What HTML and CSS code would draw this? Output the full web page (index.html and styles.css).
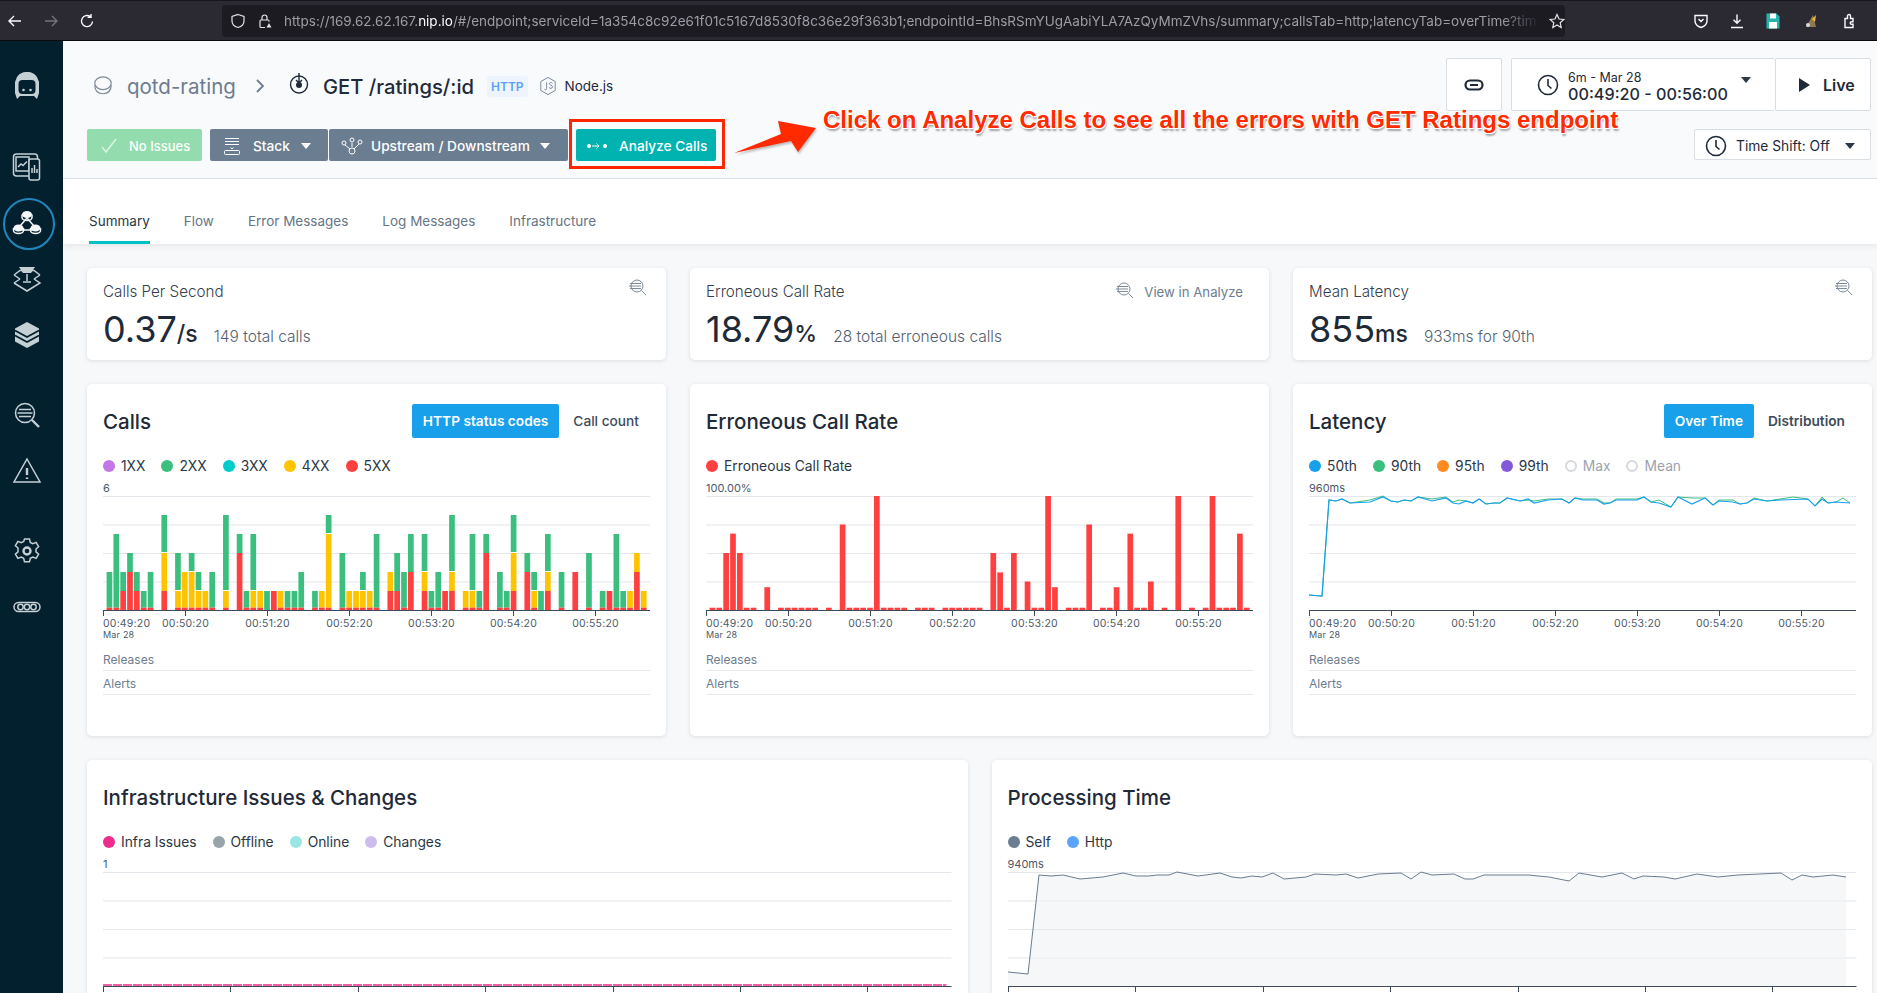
FILE: index.html
```html
<!DOCTYPE html>
<html lang="en">
<head>
  <meta charset="UTF-8">
  <meta name="viewport" content="width=device-width, initial-scale=1.0">
  <title>GET /ratings/:id</title>
  <link rel="stylesheet" href="styles.css">
</head>
<body>
  <div class="browser-bar">
    <svg class="nav-icon" viewBox="0 0 16 16"><path d="M14 8H2M7 3 2 8l5 5"/></svg>
    <svg class="nav-icon nav-icon-dim" viewBox="0 0 16 16"><path d="M2 8h12M9 3l5 5-5 5"/></svg>
    <svg class="nav-icon" viewBox="0 0 16 16"><path d="M13.5 8.500A5.500 5.500 0 1 1 11.500 3.800M12 1v3.400H8.600"/></svg>
    <div class="url-bar">
      <svg class="url-icon" viewBox="0 0 16 16"><path d="M8 1.500 14 3.500V8c0 3.500-2.500 5.500-6 6.500C4.500 13.500 2 11.500 2 8V3.500z"/></svg>
      <svg class="url-icon" viewBox="0 0 16 16"><rect x="3" y="7" width="9" height="7.500" rx="1"/><path d="M5 7V4.500a2.500 2.500 0 0 1 5 0V7"/><path class="url-warn" d="M12 9l3.500 6h-7z"/></svg>
      <div class="url-text">https://169.62.62.167.<b>nip.io</b>/#/endpoint;serviceId=1a354c8c92e61f01c5167d8530f8c36e29f363b1;endpointId=BhsRSmYUgAabiYLA7AzQyMmZVhs/summary;callsTab=http;latencyTab=overTime?tim</div>
      <svg class="url-icon url-star" viewBox="0 0 16 16"><path d="M8 1.500 10 6l4.800.5-3.600 3.200 1 4.800L8 12l-4.200 2.500 1-4.800L1.200 6.500 6 6z"/></svg>
    </div>
    <div class="browser-tools">
      <svg class="nav-icon" viewBox="0 0 16 16"><path d="M2 2.500h12V8c0 3.500-3 5.500-6 6.500C5 13.500 2 11.500 2 8zM5.500 6 8 8.500 10.500 6"/></svg>
      <svg class="nav-icon" viewBox="0 0 16 16"><path d="M8 1.500V10M4.500 6.800 8 10.300l3.500-3.500M2 14.500h12"/></svg>
      <svg class="tool-save" viewBox="0 0 16 16"><path d="M1.500 0.500h10l3 3v12h-13z" fill="#27b3ad"/><rect x="5" y="0.500" width="6" height="5" fill="#fff"/><rect x="4" y="9" width="8" height="6.500" fill="#fff"/></svg>
      <svg class="tool-save" viewBox="0 0 16 16"><path d="M3 14 10 2l3 12z" fill="#8d7a4f"/><path d="M9 6l4-4-1 7z" fill="#f2b632"/><circle cx="5" cy="12" r="2" fill="#d9d9d9"/></svg>
      <svg class="nav-icon" viewBox="0 0 16 16"><path d="M4 5.500h2.500V3a1.500 1.500 0 0 1 3 0v2.500H12v3.200h-1.500a1.300 1.300 0 0 0 0 2.600H12v3.200H4z"/></svg>
    </div>
  </div>

  <div class="app">
    <nav class="sidebar">
      <a class="side-item" href="#">
        <svg class="side-icon" viewBox="0 0 30 30"><path class="fill" d="M15 1c5 0 8 2 10 5l2 5v11l-2 6-3-3H8l-3 3-2-6V11l2-5c2-3 5-5 10-5z"/><rect class="hole" x="6.500" y="9" width="17" height="14" rx="4"/><circle class="fill" cx="11.500" cy="19" r="1.300"/><circle class="fill" cx="18.500" cy="19" r="1.300"/></svg>
      </a>
      <div class="side-group">
        <a class="side-item" href="#">
          <svg class="side-icon" viewBox="0 0 30 30"><rect x="1.500" y="2" width="24" height="22" rx="3"/><rect x="4" y="5" width="13" height="14"/><path d="m6 15 3-3 2 1.500 4-4"/><rect class="hole-line" x="17" y="7" width="10.500" height="21" rx="2"/><path d="M20 21v-5M22.500 21v-8M25 21v-4"/></svg>
        </a>
        <a class="side-item side-item-active" href="#">
          <svg class="side-icon side-icon-bright" viewBox="0 0 30 30"><path d="M15 10 8 18M15 10l7 8M9 22h12"/><ellipse class="fill" cx="15" cy="6.500" rx="5" ry="3.500"/><path d="M10 6.500v3c0 1.500 2 3 5 3s5-1.500 5-3v-3"/><ellipse class="fill" cx="6.500" cy="20" rx="5" ry="3.500"/><path d="M1.500 20v2.500c0 1.500 2 3 5 3s5-1.500 5-3V20"/><ellipse class="fill" cx="23.500" cy="20" rx="5" ry="3.500"/><path d="M18.500 20v2.500c0 1.500 2 3 5 3s5-1.500 5-3V20"/></svg>
        </a>
        <a class="side-item" href="#">
          <svg class="side-icon" viewBox="0 0 30 30"><path d="M2 11 8 6.500h3M28 11l-6-4.500h-3M2 11l6 4M28 11l-6 4M2 19l13 8 13-8-6-4M2 19l6-4"/><path class="fill" d="M7 3h16l-4 6h-8z"/><path d="M15 10v7M11 18h8"/></svg>
        </a>
        <a class="side-item" href="#">
          <svg class="side-icon" viewBox="0 0 30 30"><path class="fill" d="M15 2 27 8.500v13L15 28 3 21.500v-13z"/><path class="cut" d="M3 10.500 15 17l12-6.500M3 15.500 15 22l12-6.500"/></svg>
        </a>
      </div>
      <div class="side-group">
        <a class="side-item" href="#">
          <svg class="side-icon" viewBox="0 0 30 30"><circle cx="13" cy="13" r="9.500"/><path class="thick" d="m20 20 7 7"/><path d="M7 9.500h12M5.500 13h15M7 16.500h12"/></svg>
        </a>
        <a class="side-item" href="#">
          <svg class="side-icon" viewBox="0 0 30 30"><path d="M15 3 28 26H2zM2 26h26"/><path class="thick" d="M15 12v7M15 21.500v1.500"/></svg>
        </a>
      </div>
      <div class="side-group">
        <a class="side-item" href="#">
          <svg class="side-icon" viewBox="0 0 30 30"><path d="M12.500 3h5l.8 3.500 2.500 1.200 3.300-1.300 2.500 4.300-2.600 2.300v2.800l2.600 2.300-2.500 4.300-3.300-1.300-2.500 1.200-.8 3.500h-5l-.8-3.500-2.500-1.200-3.300 1.300-2.500-4.300 2.600-2.300V12l-2.600-2.300 2.500-4.300 3.300 1.300 2.500-1.200z"/><circle class="thick" cx="15" cy="15" r="3.500"/></svg>
        </a>
        <a class="side-item" href="#">
          <svg class="side-icon" viewBox="0 0 30 30"><rect x="2" y="10.500" width="26" height="9" rx="4.500"/><circle cx="8.500" cy="15" r="2.700"/><circle cx="15" cy="15" r="2.700"/><circle cx="21.500" cy="15" r="2.700"/></svg>
        </a>
      </div>
    </nav>

    <main class="main">
      <header class="head">
        <div class="head-left">
          <div class="crumbs">
            <svg class="crumb-service" viewBox="0 0 22 22"><ellipse cx="11" cy="8" rx="9" ry="7"/><path d="M2 10c0 6 3.500 9.500 9 9.500s9-3.500 9-9.500"/></svg>
            <span class="crumb-name">qotd-rating</span>
            <svg class="crumb-sep" viewBox="0 0 10 16"><path d="m2 2 6 6-6 6"/></svg>
            <svg class="crumb-endpoint" viewBox="0 0 22 22"><circle cx="11" cy="12.500" r="8.500"/><path d="M11 1v10M8 8l3 3 3-3"/><circle class="fill" cx="11" cy="13" r="3"/></svg>
            <h1 class="crumb-title">GET /ratings/:id</h1>
            <span class="badge-http">HTTP</span>
            <svg class="crumb-tech" viewBox="0 0 20 22"><path d="M10 1.500 18 6v10l-8 4.500L2 16V6z"/><path d="M8.500 7v7c0 1.500-2 1.500-2.500.5M15 8c-1-1.500-3.500-1-3.500.5s3.500 1.500 3.500 3.500-3 2-4 .5"/></svg>
            <span class="crumb-tech-name">Node.js</span>
          </div>
          <div class="actions">
            <button class="btn btn-ok"><svg class="btn-check" viewBox="0 0 18 18"><path d="m2 10 4 5L16 2"/></svg>No Issues</button>
            <div class="btn-pair">
              <button class="btn btn-slate btn-stack">
                <svg class="btn-icon" viewBox="0 0 18 18"><path d="M2 1.500h14M2 4.500h14M2 7.500h14M7.500 10.500 9 12l1.500-1.500"/><rect x="1.500" y="13.500" width="15" height="4" rx="1"/></svg>
                Stack<i class="caret caret-light"></i>
              </button>
              <button class="btn btn-slate btn-flow">
                <svg class="btn-icon btn-icon-wide" viewBox="0 0 22 18"><circle cx="3" cy="6" r="2"/><circle cx="11" cy="3" r="2"/><circle cx="19" cy="5" r="2"/><circle cx="11" cy="14" r="3"/><path d="m4 8 5 4M11 6v4M18 7l-5 5"/></svg>
                Upstream / Downstream<i class="caret caret-light"></i>
              </button>
            </div>
            <button class="btn btn-teal">
              <svg class="btn-icon btn-icon-wide" viewBox="0 0 22 12"><circle class="fill" cx="3" cy="6" r="2"/><circle class="fill" cx="19" cy="6" r="2"/><path d="M6 6h7M10.500 3.500 13 6l-2.500 2.500"/></svg>
              Analyze Calls
            </button>
          </div>
        </div>
        <div class="head-right">
          <div class="time-row">
            <button class="box-btn box-link">
              <svg class="link-icon" viewBox="0 0 20 12"><rect x="1.500" y="1.500" width="17" height="9" rx="4.500"/><path class="link-cut" d="M6 6h8"/></svg>
            </button>
            <div class="time-group">
              <button class="box-btn box-time">
                <svg class="clock" viewBox="0 0 22 22"><circle cx="11" cy="11" r="9.500"/><path d="M11 5v6.500l3.500 3"/></svg>
                <span class="time-text"><small>6m - Mar 28</small><b>00:49:20 - 00:56:00</b></span>
                <i class="caret caret-dark caret-time"></i>
              </button>
              <button class="box-btn box-live"><i class="play"></i>Live</button>
            </div>
          </div>
          <button class="box-btn box-shift">
            <svg class="clock" viewBox="0 0 22 22"><circle cx="11" cy="11" r="9.500"/><path d="M11 5v6.500l3.500 3"/></svg>
            Time Shift: Off<i class="caret caret-dark"></i>
          </button>
        </div>

        <div class="callout-box"></div>
        <svg class="callout-arrow" viewBox="0 0 86 36"><path d="M2 34 49 15 46 2 84 9 66 33 59 22Z"/></svg>
        <div class="callout-text">Click on Analyze Calls to see all the errors with GET Ratings endpoint</div>
      </header>

      <div class="tabs">
        <a class="tab tab-active" href="#">Summary</a>
        <a class="tab" href="#">Flow</a>
        <a class="tab" href="#">Error Messages</a>
        <a class="tab" href="#">Log Messages</a>
        <a class="tab" href="#">Infrastructure</a>
      </div>

      <div class="content">
        <div class="row-three">
          <section class="card stat">
            <div class="stat-head">
              <span class="stat-label">Calls Per Second</span>
              <svg class="zoom-icon" viewBox="0 0 18 18"><circle cx="8" cy="8" r="6"/><path d="m12.500 12.500 4.500 4.500M1 5.500h11M0 8h12M1 10.500h11"/></svg>
            </div>
            <div class="stat-value"><span class="big">0.37</span><span class="unit">/s</span><span class="stat-sub">149 total calls</span></div>
          </section>
          <section class="card stat">
            <div class="stat-head">
              <span class="stat-label">Erroneous Call Rate</span>
              <span class="stat-link">
                <svg class="zoom-icon" viewBox="0 0 18 18"><circle cx="8" cy="8" r="6"/><path d="m12.500 12.500 4.500 4.500M1 5.500h11M0 8h12M1 10.500h11"/></svg>
                View in Analyze
              </span>
            </div>
            <div class="stat-value"><span class="big">18.79</span><span class="unit">%</span><span class="stat-sub">28 total erroneous calls</span></div>
          </section>
          <section class="card stat">
            <div class="stat-head">
              <span class="stat-label">Mean Latency</span>
              <svg class="zoom-icon" viewBox="0 0 18 18"><circle cx="8" cy="8" r="6"/><path d="m12.500 12.500 4.500 4.500M1 5.500h11M0 8h12M1 10.500h11"/></svg>
            </div>
            <div class="stat-value"><span class="big">855</span><span class="unit">ms</span><span class="stat-sub">933ms for 90th</span></div>
          </section>
        </div>

        <div class="row-three">
          <section class="card chart-card">
            <div class="chart-head">
              <h2>Calls</h2>
              <div class="toggle"><span class="toggle-on">HTTP status codes</span><span>Call count</span></div>
            </div>
            <div class="legend">
              <span><i class="dot dot-purple"></i>1XX</span>
              <span><i class="dot dot-green"></i>2XX</span>
              <span><i class="dot dot-cyan"></i>3XX</span>
              <span><i class="dot dot-yellow"></i>4XX</span>
              <span><i class="dot dot-red"></i>5XX</span>
            </div>
            <div class="y-max">6</div>
            <svg class="plot" id="callsChart"></svg>
            <div class="lane">Releases</div>
            <div class="lane">Alerts</div>
          </section>
          <section class="card chart-card">
            <div class="chart-head"><h2>Erroneous Call Rate</h2></div>
            <div class="legend">
              <span><i class="dot dot-red"></i>Erroneous Call Rate</span>
            </div>
            <div class="y-max">100.00%</div>
            <svg class="plot" id="errorChart"></svg>
            <div class="lane">Releases</div>
            <div class="lane">Alerts</div>
          </section>
          <section class="card chart-card">
            <div class="chart-head">
              <h2>Latency</h2>
              <div class="toggle"><span class="toggle-on">Over Time</span><span class="toggle-strong">Distribution</span></div>
            </div>
            <div class="legend">
              <span><i class="dot dot-blue"></i>50th</span>
              <span><i class="dot dot-green"></i>90th</span>
              <span><i class="dot dot-orange"></i>95th</span>
              <span><i class="dot dot-violet"></i>99th</span>
              <span class="legend-off"><i class="dot dot-off"></i>Max</span>
              <span class="legend-off"><i class="dot dot-off"></i>Mean</span>
            </div>
            <div class="y-max">960ms</div>
            <svg class="plot" id="latencyChart"></svg>
            <div class="lane">Releases</div>
            <div class="lane">Alerts</div>
          </section>
        </div>

        <div class="row-two">
          <section class="card chart-card">
            <div class="chart-head"><h2>Infrastructure Issues &amp; Changes</h2></div>
            <div class="legend">
              <span><i class="dot dot-pink"></i>Infra Issues</span>
              <span><i class="dot dot-gray"></i>Offline</span>
              <span><i class="dot dot-mint"></i>Online</span>
              <span><i class="dot dot-lilac"></i>Changes</span>
            </div>
            <div class="y-max">1</div>
            <svg class="plot" id="infraChart"></svg>
          </section>
          <section class="card chart-card">
            <div class="chart-head"><h2>Processing Time</h2></div>
            <div class="legend">
              <span><i class="dot dot-slate"></i>Self</span>
              <span><i class="dot dot-sky"></i>Http</span>
            </div>
            <div class="y-max">940ms</div>
            <svg class="plot" id="processingChart"></svg>
          </section>
        </div>
      </div>
    </main>
  </div>

  <script src="charts.js"></script>
</body>
</html>
```

FILE: styles.css
```css
* {
  box-sizing: border-box;
}

html,
body {
  height: 100%;
}

body {
  margin: 0;
  overflow: hidden;
  display: flex;
  flex-direction: column;
  font-family: Inter, "Liberation Sans", sans-serif;
  color: #1f2a38;
  background-color: #f7f8fa;
}

button {
  font-family: inherit;
  cursor: pointer;
}

svg {
  flex: none;
}

/* browser chrome */
.browser-bar {
  height: 41px;
  flex: none;
  display: flex;
  align-items: center;
  background-color: #2b2a33;
  border-top: 1px solid #17161c;
  border-bottom: 1px solid #0c0c0f;
  padding: 0 17px 0 7px;
  color: #fbfbfe;
}

.nav-icon {
  width: 16px;
  height: 16px;
  margin-right: 20px;
  fill: none;
  stroke: #fbfbfe;
  stroke-width: 1.4;
}

.nav-icon-dim {
  stroke: #75747c;
}

.url-bar {
  width: 1349px;
  height: 32px;
  margin-left: 107px;
  border-radius: 4px;
  background-color: #1c1b22;
  display: flex;
  align-items: center;
  padding-left: 8px;
}

.url-icon {
  width: 16px;
  height: 18px;
  margin-right: 11px;
  fill: none;
  stroke: #e4e4e8;
  stroke-width: 1.2;
}

.url-warn {
  fill: #e4e4e8;
  stroke: #1c1b22;
}

.url-text {
  width: 1256px;
  margin-left: 0;
  font-size: 13.5px;
  color: #9d9da3;
  white-space: nowrap;
  -webkit-mask-image: linear-gradient(to right, #000 97%, transparent);
  mask-image: linear-gradient(to right, #000 97%, transparent);
}

.url-text b {
  font-weight: 400;
  color: #fbfbfe;
}

.url-star {
  margin: 0 0 0 9px;
}

.browser-tools {
  margin-left: 128px;
  display: flex;
  align-items: center;
  gap: 2px;
}

.browser-tools .nav-icon {
  margin-right: 18px;
}

.tool-save {
  width: 16px;
  height: 18px;
  margin-right: 20px;
}

/* app shell */
.app {
  flex: 1;
  min-height: 0;
  display: flex;
}

.sidebar {
  width: 63px;
  flex: none;
  background-color: #03202e;
  padding: 17px 9px 0 0;
  display: flex;
  flex-direction: column;
}

.side-group {
  margin-top: 25px;
  display: flex;
  flex-direction: column;
}

.side-group + .side-group {
  margin-top: 24px;
}

.side-item {
  height: 56px;
  display: flex;
  align-items: center;
  justify-content: center;
}

.side-item-active {
  position: relative;
}

.side-item-active::after {
  content: "";
  position: absolute;
  width: 48px;
  height: 48px;
  left: 3px;
  top: 3px;
  border: 2px solid #2186bb;
  border-radius: 50%;
}

.side-icon {
  width: 30px;
  height: 30px;
  fill: none;
  stroke: #c5d0d5;
  stroke-width: 1.5;
}

.side-icon .fill {
  fill: #c5d0d5;
  stroke: none;
}

.side-icon .hole {
  fill: #03202e;
  stroke: none;
}

.side-icon .hole-line {
  fill: #03202e;
}

.side-icon .cut {
  stroke: #03202e;
  stroke-width: 1.8;
}

.side-icon .thick {
  stroke-width: 2.4;
}

.side-icon-bright {
  stroke: #f4f7f8;
  stroke-width: 1.5;
}

.side-icon-bright .fill {
  fill: #f4f7f8;
}

.main {
  flex: 1;
  min-width: 0;
  display: flex;
  flex-direction: column;
}

/* header */
.head {
  position: relative;
  height: 138px;
  flex: none;
  display: flex;
  justify-content: space-between;
  padding: 17px 6px 0 24px;
  background-color: #f9fafc;
  border-bottom: 1px solid #dfe4e9;
}

.crumbs {
  height: 56px;
  display: flex;
  align-items: center;
  padding-left: 6px;
}

.crumb-service {
  width: 20px;
  height: 22px;
  fill: none;
  stroke: #7c8a99;
  stroke-width: 1.3;
}

.crumb-name {
  margin-left: 14px;
  font-size: 20.5px;
  color: #6d7d8f;
}

.crumb-sep {
  width: 10px;
  height: 16px;
  margin-left: 19px;
  fill: none;
  stroke: #6d7d8f;
  stroke-width: 1.8;
}

.crumb-endpoint {
  width: 22px;
  height: 24px;
  margin-left: 23px;
  margin-top: -6px;
  fill: none;
  stroke: #1f2a38;
  stroke-width: 1.4;
}

.crumb-endpoint .fill {
  fill: #1f2a38;
  stroke: none;
}

.crumb-title {
  margin: 0 0 0 13px;
  font-size: 20.2px;
  font-weight: 500;
}

.badge-http {
  margin-left: 13px;
  padding: 3px 4px;
  border-radius: 2px;
  background-color: #edf4fd;
  color: #5ba1f5;
  font-size: 12px;
  font-weight: 600;
}

.crumb-tech {
  width: 18px;
  height: 22px;
  margin-left: 11px;
  fill: none;
  stroke: #6d7d8f;
  stroke-width: 1;
}

.crumb-tech-name {
  margin-left: 8px;
  font-size: 13.5px;
}

.actions {
  display: flex;
  margin-top: 15px;
  gap: 8px;
}

.btn-pair {
  display: flex;
  gap: 1px;
}

.btn {
  height: 32px;
  border: 0;
  border-radius: 2px;
  display: flex;
  align-items: center;
  padding: 1px 12px 0;
  color: #fff;
  font-size: 13.7px;
  font-weight: 500;
  white-space: nowrap;
}

.btn-ok {
  width: 115px;
  background-color: #93dcae;
  padding-left: 13px;
  font-size: 13px;
}

.btn-check {
  width: 18px;
  height: 18px;
  margin-right: 11px;
  fill: none;
  stroke: #d8f3e2;
  stroke-width: 1.6;
}

.btn-slate {
  background-color: #6b7d90;
}

.btn-stack {
  width: 118px;
  padding-left: 13px;
}

.btn-flow {
  width: 239px;
}

.btn-flow .btn-icon {
  margin-right: 8px;
}

.btn-flow .caret {
  margin-left: 10px;
}

.btn-teal {
  width: 140px;
  padding-left: 10px;
  background-color: #00b3b0;
}

.btn-icon {
  width: 18px;
  height: 18px;
  margin-right: 12px;
  fill: none;
  stroke: #fff;
  stroke-width: 1;
}

.btn-stack .btn-icon {
  margin-right: 12px;
}

.btn-icon-wide {
  width: 22px;
}

.btn-teal .btn-icon {
  margin-right: 11px;
}

.btn-icon .fill {
  fill: #fff;
  stroke: none;
}

.caret {
  width: 0;
  height: 0;
  margin-left: 11px;
  border-left: 5px solid transparent;
  border-right: 5px solid transparent;
  border-top: 6px solid #1f2a38;
}

.caret-light {
  border-top-color: #fff;
}

.caret-dark {
  border-top-color: #2c3846;
}

.head-right {
  display: flex;
  flex-direction: column;
  align-items: flex-end;
  gap: 18px;
}

.time-row {
  display: flex;
  gap: 9px;
}

.time-group {
  display: flex;
}

.box-btn {
  display: flex;
  align-items: center;
  background-color: #fff;
  border: 1px solid #d9dee3;
  border-radius: 2px;
  color: #1f2a38;
}

.box-link {
  width: 56px;
  height: 53px;
  justify-content: center;
}

.link-icon {
  width: 20px;
  height: 12px;
  fill: none;
  stroke: #1f2a38;
  stroke-width: 2.2;
}

.link-cut {
  stroke-width: 2;
}

.box-time {
  width: 264px;
  height: 53px;
  padding: 0 0 0 25px;
  border-right: 0;
}

.clock {
  width: 22px;
  height: 22px;
  fill: none;
  stroke: #1f2a38;
  stroke-width: 1.6;
}

.time-text {
  margin: 4px 0 0 9px;
  display: flex;
  flex-direction: column;
  align-items: flex-start;
}

.time-text small {
  font-size: 12.5px;
  line-height: 14px;
}

.time-text b {
  font-size: 16.2px;
  line-height: 18px;
  font-weight: 500;
}

.caret-time {
  margin: -2px 0 0 13px;
  margin-top: -9px;
}

.box-live {
  width: 96px;
  height: 53px;
  padding-left: 23px;
  font-size: 16px;
  font-weight: 600;
}

.play {
  width: 0;
  height: 0;
  margin-right: 13px;
  border-top: 7px solid transparent;
  border-bottom: 7px solid transparent;
  border-left: 11px solid #1f2a38;
}

.box-shift {
  width: 177px;
  height: 31px;
  padding: 2px 0 0 10px;
  font-size: 13.8px;
}

.box-shift .clock {
  margin-right: 9px;
}

.box-shift .caret {
  margin-left: 15px;
}

/* annotation drawn over the screenshot */
.callout-box {
  position: absolute;
  left: 506px;
  top: 78px;
  width: 156px;
  height: 50px;
  border: 3px solid #ff2600;
}

.callout-arrow {
  position: absolute;
  left: 669px;
  top: 78px;
  width: 86px;
  height: 36px;
  fill: #ff2a00;
  filter: drop-shadow(1px 2px 1px rgba(0, 0, 0, 0.25));
}

.callout-text {
  position: absolute;
  left: 760px;
  top: 65px;
  font-family: "Liberation Sans", Arial, sans-serif;
  font-size: 24px;
  font-weight: 700;
  line-height: 28px;
  color: #ff2a00;
  white-space: nowrap;
  text-shadow: 1px 1px 0 #fff, -1px -1px 0 #fff, 1px -1px 0 #fff, -1px 1px 0 #fff, 1px 3px 2px rgba(0, 0, 0, 0.35);
}

/* tabs */
.tabs {
  position: relative;
  height: 65px;
  flex: none;
  display: flex;
  gap: 34px;
  padding-left: 26px;
  background-color: #fff;
  box-shadow: 0 2px 6px rgba(0, 0, 0, 0.08);
}

.tab {
  padding-top: 33px;
  font-size: 13.5px;
  line-height: 18px;
  color: #667585;
  text-decoration: none;
}

.tab-active {
  color: #2b3745;
  border-bottom: 3px solid #00c2c7;
}

/* cards */
.content {
  flex: 1;
  min-height: 0;
  overflow: hidden;
  padding: 24px 5px 0 24px;
  display: flex;
  flex-direction: column;
  gap: 24px;
}

.row-three {
  display: grid;
  grid-template-columns: repeat(3, 1fr);
  gap: 24px;
}

.row-two {
  display: grid;
  grid-template-columns: repeat(2, 1fr);
  gap: 24px;
}

.card {
  background-color: #fff;
  border-radius: 5px;
  box-shadow: 0 1px 4px rgba(20, 40, 60, 0.12);
}

.stat {
  height: 92px;
  padding: 14px 16px 0;
}

.stat-head {
  display: flex;
  justify-content: space-between;
  align-items: flex-start;
  height: 20px;
}

.stat-label {
  font-size: 15.2px;
  line-height: 20px;
  font-weight: 300;
  color: #34404e;
}

.stat-link {
  display: flex;
  align-items: center;
  gap: 7px;
  margin-right: 10px;
  font-size: 13.2px;
  line-height: 20px;
  color: #6d7d8f;
}

.zoom-icon {
  width: 18px;
  height: 18px;
  margin: -4px 3px 0 0;
  fill: none;
  stroke: #7c8a99;
  stroke-width: 1;
}

.stat-value {
  display: flex;
  align-items: baseline;
  margin-top: 4px;
}

.big {
  font-size: 36px;
  line-height: 46px;
  font-weight: 400;
}

.unit {
  font-size: 23px;
  font-weight: 500;
}

.stat-sub {
  margin-left: 16px;
  font-size: 15.5px;
  font-weight: 300;
  color: #53616f;
}

.chart-card {
  padding: 20px 16px 0;
  height: 352px;
}

.row-two .chart-card {
  height: 400px;
}

.chart-head {
  height: 34px;
  display: flex;
  align-items: center;
  justify-content: space-between;
}

.chart-head h2 {
  margin: 0;
  font-size: 20.5px;
  font-weight: 500;
}

.toggle {
  display: flex;
  align-items: center;
  margin-right: -3px;
  font-size: 13.7px;
  font-weight: 500;
  color: #3e4b59;
}

.toggle span {
  padding: 0 14px;
  line-height: 34px;
}

.toggle .toggle-on {
  padding: 0 11px;
  background-color: #18a0ea;
  border-radius: 2px;
  color: #fff;
  font-weight: 600;
}

.toggle .toggle-strong {
  font-weight: 600;
}

.legend {
  height: 20px;
  margin-top: 18px;
  display: flex;
  gap: 16px;
  font-size: 13.8px;
  line-height: 20px;
  color: #2b3745;
}

.legend span {
  display: flex;
  align-items: center;
}

.legend .legend-off {
  color: #9aa3ad;
}

.dot {
  width: 12px;
  height: 12px;
  margin-right: 6px;
  border-radius: 50%;
}

.dot-purple { background-color: #c276e8; }
.dot-green { background-color: #3bbf7f; }
.dot-cyan { background-color: #00cccc; }
.dot-yellow { background-color: #ffc400; }
.dot-red { background-color: #ff4040; }
.dot-blue { background-color: #18a0ea; }
.dot-orange { background-color: #ff8a1f; }
.dot-violet { background-color: #825ad9; }
.dot-pink { background-color: #ec2d8c; }
.dot-gray { background-color: #97a4aa; }
.dot-mint { background-color: #9ae5e3; }
.dot-lilac { background-color: #cdbcee; }
.dot-slate { background-color: #6b7d90; }
.dot-sky { background-color: #5ba4fb; }

.dot-off {
  border: 2px solid #d5d9dd;
}

.y-max {
  height: 15px;
  margin-top: 5px;
  font-size: 11px;
  line-height: 15px;
  color: #4d5a68;
}

.plot {
  display: block;
  width: 100%;
  height: 151px;
  overflow: visible;
}

.grid-line {
  stroke: #e4e8ec;
  stroke-width: 1;
}

.grid-line-soft {
  stroke: #f0f2f5;
  stroke-width: 2;
}

.axis-line {
  stroke: #3e4a58;
  stroke-width: 1;
}

.axis-label {
  font-size: 10.5px;
  fill: #4d5a68;
  letter-spacing: 0.2px;
}

.axis-date {
  font-size: 9px;
}

.line-blue,
.line-green,
.line-slate,
.line-pink {
  fill: none;
}

.line-blue {
  stroke: #18a0ea;
  stroke-width: 1.2;
}

.line-green {
  stroke: #3bbf7f;
  stroke-width: 1;
}

.line-slate {
  stroke: #6b7d90;
  stroke-width: 1;
}

.line-pink {
  stroke: #ec2d8c;
  stroke-width: 1.5;
}

.area-slate {
  fill: #f6f7f9;
}

.lane {
  height: 24px;
  border-bottom: 1px solid #e3e8ed;
  font-size: 12px;
  line-height: 25px;
  color: #6d7d8f;
}
```

FILE: charts.js
```js
// chart data, read per 6.85px slot
const STEP = 6.85;
const PLOT_BASE = 114;
const s = 0.12; // small red cap at the foot of a bar

// [red, yellow, green]
const calls = [
  [s,0,2],[s,0,4],[1,0,1],[2,0,1],[1,0,1],[s,0,1],[s,0,2],null,[1,2,2],null,
  [s,1,2],[s,2,0],[s,2,1],[s,1,1],[s,1,0],[s,0,2],null,[s,1,4],null,[3,0,1],
  [s,0,1],[s,1,3],[s,1,0],[0,0,1],[1,0,0],[s,1,0],[s,0,1],[s,0,1],[s,0,2],null,
  [s,0,1],[s,1,0],[s,4,1],null,[s,0,3],[s,1,0],[s,1,0],[s,1,1],[s,1,0],[s,0,4],
  null,[1,1,0],[1,0,2],[s,0,2],[2,0,2],null,[1,1,2],[s,0,1],[s,0,2],[1,0,0],
  [1,1,3],null,[s,1,0],[s,1,3],[s,0,1],[3,0,1],null,[s,0,2],[s,0,1],[1,2,2],
  null,[2,0,1],[s,1,1],[0,0,1],[1,1,2],null,[s,0,2],null,[2,0,0],null,
  [s,0,3],null,[s,0,1],[1,0,0],[s,0,4],[s,0,1],[s,1,0],[2,1,0],[s,1,0]
];

// erroneous share per slot, 0.02 is the small stub
const t = 0.02;
const errors = [
  t,t,.5,.67,.5,t,t,0,.2,0,
  t,t,t,t,t,t,0,t,0,.75,
  t,t,t,t,1,t,t,t,t,0,
  t,t,t,0,t,t,t,t,t,t,
  0,.5,.33,t,.5,0,.25,t,t,1,
  .2,0,t,t,t,.75,0,t,t,.2,
  0,.67,t,t,.25,0,t,0,1,0,
  t,0,t,1,t,t,t,.67,t
];

// traced as [x, y], x from the left of the plot and y from the top gridline
const latencyBlue = [[0,99],[13,100],[20,4],[27,5],[33,3],[41,7],[61,6],[74,1],[82,5],[89,6],[95,4],[102,5],[109,1],[123,5],[137,2],[144,7],[150,8],[157,5],[164,7],[170,3],[177,8],[185,7],[191,7],[198,2],[211,5],[219,3],[225,7],[239,4],[253,3],[260,7],[266,2],[274,4],[288,4],[295,8],[301,7],[307,4],[328,4],[335,1],[342,6],[350,7],[362,11],[369,1],[383,8],[396,2],[404,9],[410,5],[424,6],[431,8],[438,7],[445,3],[458,5],[471,4],[499,3],[506,10],[513,3],[519,7],[527,6],[541,7]];
const latencyGreen = [[0,99],[13,100],[20,4],[27,5],[33,3],[41,7],[61,4],[74,0],[82,5],[89,6],[95,4],[102,5],[109,1],[123,3],[137,1],[144,6],[150,4],[157,5],[164,7],[170,3],[177,8],[185,7],[191,7],[198,2],[211,5],[219,4],[225,5],[239,3],[253,3],[260,7],[266,2],[274,3],[288,3],[295,7],[301,7],[307,3],[328,3],[335,1],[342,6],[350,4],[362,11],[369,1],[383,2],[396,2],[404,9],[410,4],[424,4],[431,8],[438,7],[445,2],[458,5],[471,3],[484,1],[499,3],[506,10],[513,1],[519,7],[527,6],[534,2],[541,7]];
const processing = [[0,100],[20,102],[31,3],[43,4],[55,3],[72,7],[95,5],[115,1],[128,4],[141,4],[149,3],[161,3],[169,0],[190,4],[212,1],[224,5],[233,6],[244,4],[254,5],[265,1],[276,7],[298,5],[307,2],[328,3],[338,2],[350,6],[370,2],[393,1],[403,7],[413,0],[424,3],[446,2],[457,7],[465,7],[476,3],[507,3],[521,3],[530,4],[541,5],[561,9],[571,1],[594,5],[614,1],[626,7],[635,4],[656,5],[667,7],[689,2],[710,5],[730,3],[773,1],[784,8],[794,3],[805,5],[825,3],[838,5]];

const NS = 'http://www.w3.org/2000/svg';

function add(svg, tag, attrs, text) {
  const el = document.createElementNS(NS, tag);
  Object.keys(attrs).forEach((k) => el.setAttribute(k, attrs[k]));
  if (text) el.textContent = text;
  svg.appendChild(el);
  return el;
}

function drawGrid(svg) {
  const width = svg.getBoundingClientRect().width;
  [0, 28.5, 57, 85.5].forEach((y, i) => {
    add(svg, 'line', {
      x1: 0, x2: width, y1: y + 0.5, y2: y + 0.5,
      class: i % 2 ? 'grid-line-soft' : 'grid-line'
    });
  });
  return width;
}

function drawAxis(svg, width, tickStep, withLabels) {
  const labels = ['00:49:20', '00:50:20', '00:51:20', '00:52:20', '00:53:20', '00:54:20', '00:55:20'];
  add(svg, 'line', { x1: 0, x2: width, y1: PLOT_BASE + 0.5, y2: PLOT_BASE + 0.5, class: 'axis-line' });
  labels.forEach((label, i) => {
    const x = Math.round(i * tickStep) + 0.5;
    add(svg, 'line', { x1: x, x2: x, y1: PLOT_BASE, y2: PLOT_BASE + 6, class: 'axis-line' });
    if (withLabels) {
      add(svg, 'text', {
        x: i === 0 ? 0 : x,
        y: PLOT_BASE + 17,
        'text-anchor': i === 0 ? 'start' : 'middle',
        class: 'axis-label'
      }, label);
    }
  });
  if (withLabels) {
    add(svg, 'text', { x: 0, y: PLOT_BASE + 28, class: 'axis-label axis-date' }, 'Mar 28');
  }
}

function barRect(svg, slot, from, to, fill) {
  if (to - from <= 0) return;
  add(svg, 'rect', {
    x: (3.6 + slot * STEP).toFixed(2),
    y: PLOT_BASE - to,
    width: 5.7,
    height: to - from,
    fill
  });
}

function drawCalls() {
  const svg = document.getElementById('callsChart');
  const width = drawGrid(svg);
  const unit = 19;
  calls.forEach((bar, i) => {
    if (!bar) return;
    const red = bar[0] === s ? 2.3 : bar[0] * unit;
    const solidRed = bar[0] === s ? 0 : bar[0] * unit;
    const yellowTop = solidRed + bar[1] * unit;
    const top = yellowTop + bar[2] * unit;
    // a hairline of white shows where yellow meets green
    const greenFrom = bar[1] ? yellowTop + 1 : red;
    barRect(svg, i, greenFrom, top, '#3bbf7f');
    barRect(svg, i, red, yellowTop, '#ffc400');
    barRect(svg, i, 0, red, '#ff4040');
  });
  drawAxis(svg, width, 82, true);
}

function drawErrors() {
  const svg = document.getElementById('errorChart');
  const width = drawGrid(svg);
  errors.forEach((v, i) => {
    barRect(svg, i, 0, v * PLOT_BASE, '#ff4040');
  });
  drawAxis(svg, width, 82, true);
}

function toPoints(list) {
  return list.map((p) => `${p[0]},${p[1]}`).join(' ');
}

function drawLatency() {
  const svg = document.getElementById('latencyChart');
  const width = drawGrid(svg);
  add(svg, 'polyline', { points: toPoints(latencyGreen), class: 'line-green' });
  add(svg, 'polyline', { points: toPoints(latencyBlue), class: 'line-blue' });
  drawAxis(svg, width, 82, true);
}

// the two lower charts run past the fold, so their labels never show
function drawInfra() {
  const svg = document.getElementById('infraChart');
  const width = drawGrid(svg);
  add(svg, 'line', {
    x1: 0, x2: width - 5, y1: PLOT_BASE - 1, y2: PLOT_BASE - 1,
    class: 'line-pink', 'stroke-dasharray': '9 1'
  });
  drawAxis(svg, width, 127.4, false);
}

function drawProcessing() {
  const svg = document.getElementById('processingChart');
  const width = drawGrid(svg);
  const last = processing[processing.length - 1][0];
  const area = `0,${PLOT_BASE} ${toPoints(processing)} ${last},${PLOT_BASE}`;
  svg.insertBefore(add(svg, 'polygon', { points: area, class: 'area-slate' }), svg.firstChild);
  add(svg, 'polyline', { points: toPoints(processing), class: 'line-slate' });
  drawAxis(svg, width, 127.4, false);
}

drawCalls();
drawErrors();
drawLatency();
drawInfra();
drawProcessing();
```
